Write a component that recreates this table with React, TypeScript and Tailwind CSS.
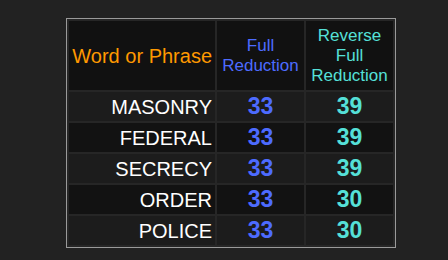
import React from 'react';

type Row = {
    word: string;
    full: number;
    reverse: number;
};

const rows: Row[] = [
    { word: 'MASONRY', full: 33, reverse: 39 },
    { word: 'FEDERAL', full: 33, reverse: 39 },
    { word: 'SECRECY', full: 33, reverse: 39 },
    { word: 'ORDER', full: 33, reverse: 30 },
    { word: 'POLICE', full: 33, reverse: 30 },
];

export default function App() {
    return (
        <main className="h-screen w-full bg-[#222222] pl-[66px] pt-[18px] font-['Liberation_Sans',Arial,sans-serif]">
            <div className="w-[330px] border border-[#9a9a9a] bg-[#262626] p-[2px]">
                <div className="grid grid-cols-[146px_87px_87px] gap-[2px]">
                    {/* header */}
                    <div className="h-[69px] bg-[#111111] flex items-center justify-end pr-[3px] text-[20px] text-[#ff9900]">
                        Word or Phrase
                    </div>
                    <div className="h-[69px] bg-[#111111] flex items-center justify-center text-center text-[17px] leading-[20px] text-[#4d6bff]">
                        Full<br />Reduction
                    </div>
                    <div className="h-[69px] bg-[#111111] flex items-center justify-center text-center text-[17px] leading-[20px] text-[#55e0d8]">
                        Reverse<br />Full<br />Reduction
                    </div>

                    {/* rows */}
                    {rows.map((r, i) => {
                        const bg = i % 2 === 0 ? 'bg-[#1c1c1c]' : 'bg-[#121212]';
                        return (
                            <React.Fragment key={r.word}>
                                <div className={`h-[29px] ${bg} flex items-center justify-end pr-[3px] text-[20px] text-white`}>
                                    {r.word}
                                </div>
                                <div className={`h-[29px] ${bg} flex items-center justify-center text-[23px] font-bold text-[#4d6bff]`}>
                                    {r.full}
                                </div>
                                <div className={`h-[29px] ${bg} flex items-center justify-center text-[23px] font-bold text-[#55e0d8]`}>
                                    {r.reverse}
                                </div>
                            </React.Fragment>
                        );
                    })}
                </div>
            </div>
        </main>
    );
}
